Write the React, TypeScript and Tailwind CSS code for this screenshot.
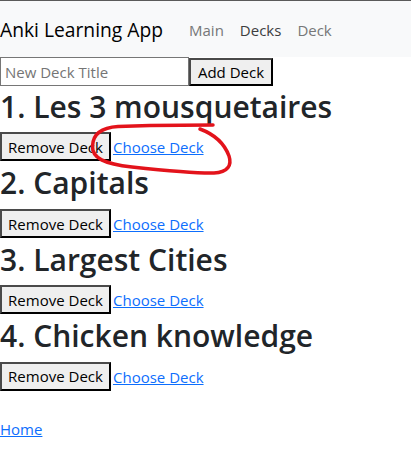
import React from 'react';

const decks = ['Les 3 mousquetaires', 'Capitals', 'Largest Cities', 'Chicken knowledge'];

const navLinks = [
  { label: 'Main', active: false },
  { label: 'Decks', active: true },
  { label: 'Deck', active: false },
];

const DeckRow = ({ index, title }: { index: number; title: string }) => (
  <div>
    <h2 className="mb-2 pt-[4px] text-[30px] leading-[34.4px] font-semibold text-[#212529]">
      {index}. {title}
    </h2>
    <div className="flex h-[30px] items-start">
      <button className="flex h-[29px] w-[111px] items-center justify-center border-2 border-[#4a4a4a] border-r-black border-b-black bg-[#efefef] pt-px text-[15px] text-black">
        Remove Deck
      </button>
      <a href="#" className="ml-[2px] mt-[3px] text-[15px] leading-[24px] text-[#0d6efd] underline">
        Choose Deck
      </a>
    </div>
  </div>
);

const App = () => {
  return (
    <div className="relative min-h-[467px] w-[411px] overflow-hidden bg-white font-['Open_Sans',sans-serif]">
      <nav className="flex h-[57px] items-center border-t border-[#5a5a5a] bg-[#f8f9fa] pt-px">
        <span className="mr-[26px] text-[19.25px] leading-[30px] text-black">Anki Learning App</span>
        <div className="flex gap-4">
          {navLinks.map(({ label, active }) => (
            <a
              key={label}
              href="#"
              className={
                active
                  ? 'text-[15px] leading-[24px] text-[#3d3e3f]'
                  : 'text-[15px] leading-[24px] text-[#767778]'
              }
            >
              {label}
            </a>
          ))}
        </div>
      </nav>

      <div className="flex items-start">
        <input
          type="text"
          placeholder="New Deck Title"
          className="h-[29px] w-[189px] border border-[#767676] px-[4px] text-[15px] outline-none placeholder:text-[#757575]"
        />
        <button className="mt-px flex h-[28px] w-[84px] items-center justify-center border-2 border-[#4a4a4a] border-r-black border-b-black bg-[#efefef] text-[15px] text-black">
          Add Deck
        </button>
      </div>

      {decks.map((title, i) => (
        <DeckRow key={title} index={i + 1} title={title} />
      ))}

      <div className="mt-[25px]">
        <a href="#" className="text-[15px] leading-[24px] text-[#0d6efd] underline">
          Home
        </a>
      </div>

      {/* red pen annotation drawn over the page */}
      <svg
        className="pointer-events-none absolute left-0 top-0"
        width="411"
        height="467"
        viewBox="0 0 411 467"
        fill="none"
      >
        <path
          d="M213 125 L150 125.5 L118 126.5 C101 127.5 93 134 92.5 146 C92 158 104 164 132 167 C165 170.5 196 173.5 214 173 C228 172.5 232 165 229 156 C225 145 216 135 200 129"
          stroke="#e3131b"
          strokeWidth="3.5"
          strokeLinecap="round"
          strokeLinejoin="round"
        />
      </svg>
    </div>
  );
};

export default App;
